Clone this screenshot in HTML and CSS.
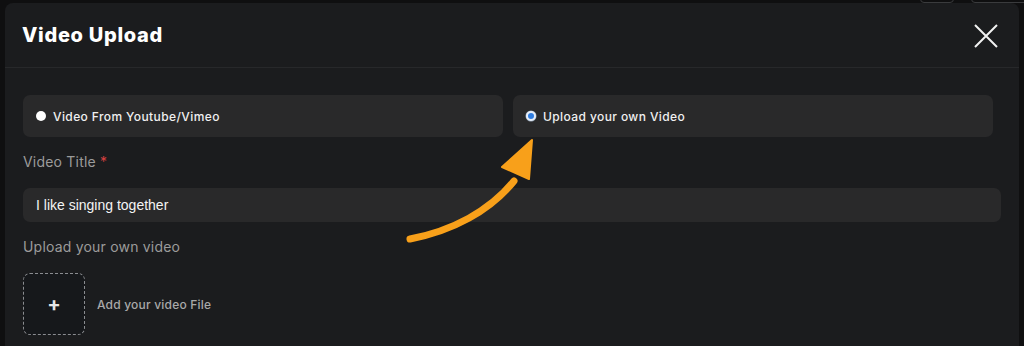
FILE: index.html
```html
<!DOCTYPE html>
<html lang="en">
<head>
    <meta name="viewport" content="width=device-width, initial-scale=1.0" />
    <title>Video Upload</title>
    <link rel="stylesheet" href="styles.css">
</head>
<body>
    <div class="backdrop">
        <span class="ghost-btn ghost-one"></span>
        <span class="ghost-btn ghost-two"></span>
    </div>

    <div class="modal">
        <header class="modal-head">
            <h2>Video Upload</h2>
            <button class="close-btn" aria-label="Close">
                <svg width="24" height="24" viewBox="0 0 24 24">
                    <path d="M1 1 L23 23 M23 1 L1 23" stroke="#f2f2f2" stroke-width="2" fill="none" />
                </svg>
            </button>
        </header>

        <section class="modal-body">
            <div class="source-row">
                <label class="source-card">
                    <input type="radio" name="source" />
                    <span>Video From Youtube/Vimeo</span>
                </label>
                <label class="source-card">
                    <input type="radio" name="source" checked />
                    <span>Upload your own Video</span>
                </label>
            </div>

            <div class="field">
                <label for="title-inp">Video Title <em>*</em></label>
                <input type="text" id="title-inp" value="I like singing together" />
            </div>

            <div class="field">
                <label>Upload your own video</label>
                <div class="upload-row">
                    <div class="drop-box">+</div>
                    <span class="drop-text">Add your video File</span>
                </div>
            </div>

            <!-- hint arrow -->
            <svg class="hint-arrow" width="140" height="120" viewBox="0 0 140 120">
                <path d="M8 102 C 50 94, 88 74, 112 44" stroke="#f8a01a" stroke-width="7" stroke-linecap="round" fill="none" />
                <polygon points="130,3 100,30 127,42" fill="#f8a01a" stroke="#f8a01a" stroke-width="2" stroke-linejoin="round" />
            </svg>
        </section>
    </div>
</body>
</html>
```

FILE: styles.css
```css
* {
    padding: 0;
    margin: 0;
    box-sizing: border-box;
    font-family: "Inter", "Noto Sans", sans-serif;
}

body {
    background-color: #0f0f10;
    height: 346px;
    overflow: hidden;
    position: relative;
}

.backdrop .ghost-btn {
    position: absolute;
    top: -10px;
    height: 13px;
    border: 1px solid #3a3b3d;
    border-radius: 4px;
}

.ghost-one {
    left: 920px;
    width: 34px;
}

.ghost-two {
    left: 971px;
    width: 60px;
}

.modal {
    position: relative;
    margin: 3px 5px 0 5px;
    height: 343px;
    background-color: #1b1c1e;
    border-radius: 8px 8px 0 0;
}

.modal-head {
    height: 65px;
    display: flex;
    justify-content: space-between;
    align-items: center;
    padding: 0 21px 0 17px;
    border-bottom: 1px solid #27282a;
}

.modal-head h2 {
    color: #fff;
    font-size: 20px;
    font-weight: 800;
    letter-spacing: 0.7px;
}

.close-btn {
    background: none;
    border: none;
    display: flex;
    margin-top: 1px;
}

.modal-body {
    position: relative;
    padding: 27px 18px 0 18px;
}

.source-row {
    display: grid;
    grid-template-columns: 480px 480px;
    gap: 10px;
}

.source-card {
    height: 42px;
    display: flex;
    align-items: center;
    gap: 7px;
    padding-left: 13px;
    background-color: #29292a;
    border-radius: 7px;
    color: #f0f0f0;
    font-size: 12px;
    font-weight: 500;
    letter-spacing: 0.4px;
}

.source-card input {
    appearance: none;
    width: 10px;
    height: 10px;
    border-radius: 50%;
    background-color: #fff;
    margin: 0;
}

.source-card input:checked {
    background-color: #2f7de1;
    border: 2px solid #e8eef8;
    box-shadow: 0 0 0 0.5px #9ab;
}

.field {
    margin-top: 15px;
}

.field label {
    display: block;
    color: #9b9b9b;
    font-size: 14px;
    line-height: 20px;
    margin-bottom: 16px;
    letter-spacing: 0.2px;
}

.field label em {
    color: #d94040;
    font-style: normal;
}

.field input {
    width: 100%;
    height: 34px;
    background-color: #29292a;
    border: none;
    border-radius: 7px;
    padding: 0 13px;
    color: #f4f4f4;
    font-family: "Liberation Sans", Arial, sans-serif;
    font-size: 14px;
    outline: none;
}

.upload-row {
    display: flex;
    align-items: center;
    gap: 12px;
}

.drop-box {
    width: 62px;
    height: 62px;
    border: 1px dashed #8a8c90;
    border-radius: 7px;
    background-color: #16181b;
    display: flex;
    align-items: center;
    justify-content: center;
    color: #e6e6e6;
    font-size: 20px;
    font-weight: 700;
}

.drop-text {
    color: #a9a9a9;
    font-size: 12px;
    font-weight: 500;
    letter-spacing: 0.2px;
}

.hint-arrow {
    position: absolute;
    left: 397px;
    top: 69px;
}
```
